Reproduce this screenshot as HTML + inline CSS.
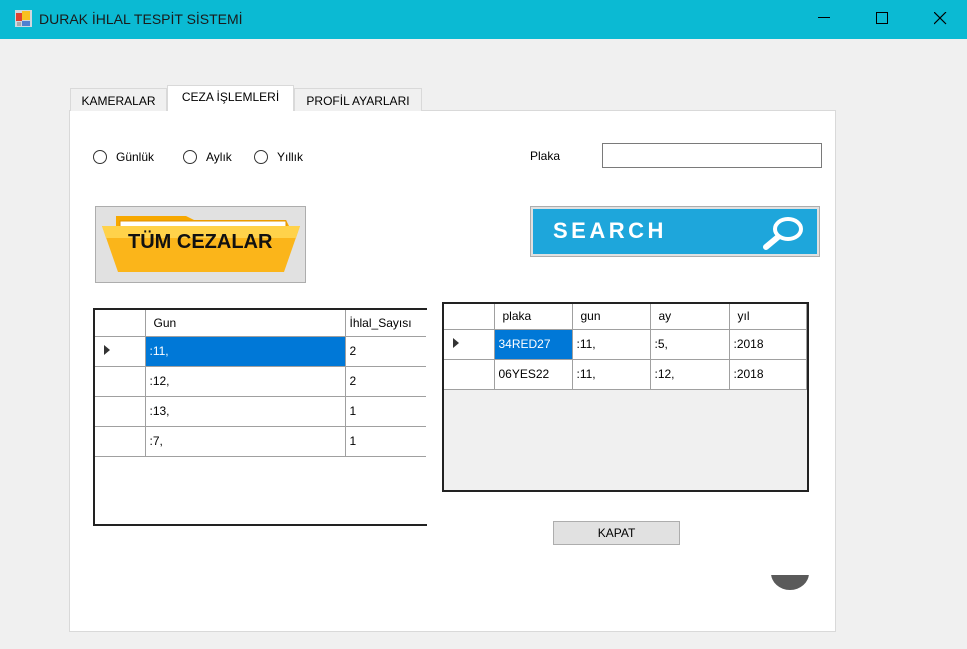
<!DOCTYPE html>
<html><head><meta charset="utf-8"><style>
*{margin:0;padding:0;box-sizing:border-box}
body{width:967px;height:649px;background:#f0f0f0;font-family:"Liberation Sans",sans-serif;font-size:12px;color:#000;position:relative;overflow:hidden}
.a{position:absolute}
.tb{left:0;top:0;width:967px;height:39px;background:#0bbad3}
.tab{height:23px;border:1px solid #d9d9d9;border-bottom:none;background:#f0f0f0;font-size:12px;padding-top:5px;text-align:center}
.radio{width:14px;height:14px;border:1px solid #333;border-radius:50%;background:#fff}
.g{background:#fff;border-collapse:collapse;font-size:12px}
.cell{border-right:1px solid #a0a0a0;border-bottom:1px solid #a0a0a0;padding-left:4px;line-height:29px;height:30px}
</style></head><body>
<div class="a tb"></div>
<svg class="a" style="left:15px;top:10px" width="17" height="17"><rect x="0" y="0" width="17" height="17" fill="#cfd8e0"/><rect x="1" y="3" width="6" height="8" fill="#e04030"/><rect x="7" y="1" width="8" height="9" fill="#f8c020"/><rect x="7" y="11" width="8" height="5" fill="#5080d0"/><rect x="2" y="12" width="4" height="4" fill="#aaa"/></svg>
<div class="a" style="left:39px;top:11px;font-size:14px;color:#1a1a1a">DURAK İHLAL TESPİT SİSTEMİ</div>
<div class="a" style="left:818px;top:17px;width:12px;height:1px;background:#000"></div>
<div class="a" style="left:876px;top:12px;width:12px;height:12px;border:1px solid #000"></div>
<svg class="a" style="left:934px;top:12px" width="13" height="13"><path d="M0 0L12 12M12 0L0 12" stroke="#000" stroke-width="1.2"/></svg>

<div class="a" style="left:69px;top:110px;width:767px;height:522px;background:#fff;border:1px solid #d9d9d9"></div>
<div class="a tab" style="left:70px;top:88px;width:97px">KAMERALAR</div>
<div class="a tab" style="left:167px;top:85px;width:127px;height:26px;background:#fff;padding-top:4px">CEZA İŞLEMLERİ</div>
<div class="a tab" style="left:294px;top:88px;width:128px">PROFİL AYARLARI</div>

<div class="a radio" style="left:93px;top:150px"></div><div class="a" style="left:116px;top:150px">Günlük</div>
<div class="a radio" style="left:183px;top:150px"></div><div class="a" style="left:206px;top:150px">Aylık</div>
<div class="a radio" style="left:254px;top:150px"></div><div class="a" style="left:277px;top:150px">Yıllık</div>
<div class="a" style="left:530px;top:149px">Plaka</div>
<div class="a" style="left:602px;top:143px;width:220px;height:25px;border:1px solid #7a7a7a;background:#fff"></div>

<div class="a" style="left:95px;top:206px;width:211px;height:77px;background:#e1e1e1;border:1px solid #adadad"></div>
<svg class="a" style="left:100px;top:214px" width="202" height="62"><path d="M16 2h70l8 4h92l4 8v10H16z" fill="#f7a800"/><rect x="20" y="7" width="166" height="10" fill="#fff" stroke="#e09000"/><path d="M2 12h198l-16 46H18z" fill="#fbb51a"/><path d="M2 12h198l-4 12H6z" fill="#ffd24a"/></svg>
<div class="a" style="left:128px;top:231px;font-size:20px;font-weight:bold;color:#111">TÜM CEZALAR</div>

<div class="a" style="left:530px;top:206px;width:290px;height:51px;background:#e1e1e1;border:1px solid #adadad"></div>
<div class="a" style="left:533px;top:209px;width:284px;height:45px;background:#1ea6db"></div>
<div class="a" style="left:553px;top:218px;font-size:22px;font-weight:bold;color:#fff;letter-spacing:3.5px">SEARCH</div>
<svg class="a" style="left:758px;top:213px" width="50" height="40"><ellipse cx="30" cy="16" rx="13" ry="10" fill="none" stroke="#fff" stroke-width="4"/><path d="M20 24L8 34" stroke="#fff" stroke-width="6" stroke-linecap="round"/></svg>

<div class="a" style="left:93px;top:308px;width:334px;height:218px;background:#fff;border:2px solid #222;border-right:none"></div>
<div class="a" style="left:95px;top:310px;width:331px;overflow:hidden">
<table class="g" style="width:340px">
<tr style="height:26px"><td class="cell" style="width:50px;height:26px;line-height:26px"></td><td class="cell" style="width:200px;height:26px;line-height:26px;padding-left:8px">Gun</td><td class="cell" style="height:26px;line-height:26px">İhlal_Sayısı</td></tr>
<tr><td class="cell"><span style="display:inline-block;border-left:6px solid #333;border-top:5px solid transparent;border-bottom:5px solid transparent;margin-left:5px"></span></td><td class="cell" style="background:#0078d7;color:#fff">:11,</td><td class="cell">2</td></tr>
<tr><td class="cell"></td><td class="cell">:12,</td><td class="cell">2</td></tr>
<tr><td class="cell"></td><td class="cell">:13,</td><td class="cell">1</td></tr>
<tr><td class="cell"></td><td class="cell">:7,</td><td class="cell">1</td></tr>
</table></div>

<div class="a" style="left:442px;top:302px;width:367px;height:190px;background:#f0f0f0;border:2px solid #222"></div>
<div class="a" style="left:444px;top:304px">
<table class="g" style="width:363px">
<tr><td class="cell" style="width:50px;height:25px;line-height:25px"></td><td class="cell" style="width:78px;height:25px;line-height:25px;padding-left:8px">plaka</td><td class="cell" style="width:78px;height:25px;line-height:25px;padding-left:8px">gun</td><td class="cell" style="width:79px;height:25px;line-height:25px;padding-left:8px">ay</td><td class="cell" style="height:25px;line-height:25px;padding-left:8px">yıl</td></tr>
<tr><td class="cell"><span style="display:inline-block;border-left:6px solid #333;border-top:5px solid transparent;border-bottom:5px solid transparent;margin-left:5px"></span></td><td class="cell" style="background:#0078d7;color:#fff">34RED27</td><td class="cell">:11,</td><td class="cell">:5,</td><td class="cell">:2018</td></tr>
<tr><td class="cell"></td><td class="cell">06YES22</td><td class="cell">:11,</td><td class="cell">:12,</td><td class="cell">:2018</td></tr>
</table></div>

<div class="a" style="left:553px;top:521px;width:127px;height:24px;background:#e1e1e1;border:1px solid #adadad;text-align:center;line-height:22px">KAPAT</div>
<div class="a" style="left:771px;top:556px;width:38px;height:34px;border-radius:0 0 19px 19px/0 0 17px 17px;background:#5a5a5a;clip-path:inset(19px 0 0 0)"></div>
</body></html>
